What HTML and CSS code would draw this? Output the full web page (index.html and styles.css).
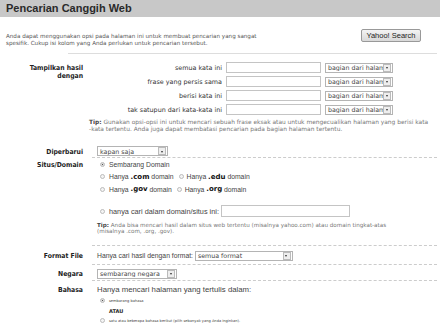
FILE: index.html
```html
<!DOCTYPE html>
<html>
  <head>
    <meta charset="UTF-8" />
    <title>Pencarian Canggih Web</title>
    <link rel="stylesheet" href="styles.css">
  </head>
  <body>
    <div class="header">
      <h1 class="title">Pencarian Canggih Web</h1>
    </div>

    <div class="intro">
      <p class="intro-text">Anda dapat menggunakan opsi pada halaman ini untuk membuat pencarian yang sangat<br>spesifik. Cukup isi kolom yang Anda perlukan untuk pencarian tersebut.</p>
      <button class="btn">Yahoo! Search</button>
    </div>
    <div class="rule"></div>

    <!-- kata kunci -->
    <div class="section">
      <div class="label">Tampilkan hasil<br>dengan</div>
      <div class="content">
        <div class="terms">
          <span class="term-label">semua kata ini</span>
          <span class="input"></span>
          <span class="select sel-part"><span class="sel-text">bagian dari halaman</span><span class="arrow"></span></span>

          <span class="term-label">frase yang persis sama</span>
          <span class="input"></span>
          <span class="select sel-part"><span class="sel-text">bagian dari halaman</span><span class="arrow"></span></span>

          <span class="term-label">berisi kata ini</span>
          <span class="input"></span>
          <span class="select sel-part"><span class="sel-text">bagian dari halaman</span><span class="arrow"></span></span>

          <span class="term-label">tak satupun dari kata-kata ini</span>
          <span class="input"></span>
          <span class="select sel-part"><span class="sel-text">bagian dari halaman</span><span class="arrow"></span></span>
        </div>
        <p class="tip tip-terms"><b>Tip:</b> Gunakan opsi-opsi ini untuk mencari sebuah frase eksak atau untuk mengecualikan halaman yang berisi kata<br>-kata tertentu. Anda juga dapat membatasi pencarian pada bagian halaman tertentu.</p>
      </div>
    </div>

    <div class="section">
      <div class="label">Diperbarui</div>
      <div class="content dashed row row-date">
        <span class="select sel-date"><span class="sel-text">kapan saja</span><span class="arrow"></span></span>
      </div>
    </div>

    <div class="section">
      <div class="label">Situs/Domain</div>
      <div class="content dashed">
        <div class="radio-row"><span class="radio checked"></span>Sembarang Domain</div>
        <div class="radio-row"><span class="radio"></span>Hanya <b>.com</b> domain <span class="radio"></span>Hanya <b>.edu</b> domain</div>
        <div class="radio-row"><span class="radio"></span>Hanya <b>.gov</b> domain <span class="radio"></span>Hanya <b>.org</b> domain</div>
        <div class="radio-row site-row"><span class="radio"></span>hanya cari dalam domain/situs ini: <span class="input site-input"></span></div>
        <p class="tip tip-site"><b>Tip:</b> Anda bisa mencari hasil dalam situs web tertentu (misalnya yahoo.com) atau domain tingkat-atas<br>(misalnya .com, .org, .gov).</p>
      </div>
    </div>

    <div class="section">
      <div class="label">Format File</div>
      <div class="content dashed row row-format">
        <span>Hanya cari hasil dengan format:</span>
        <span class="select sel-format"><span class="sel-text">semua format</span><span class="arrow"></span></span>
      </div>
    </div>

    <div class="section">
      <div class="label">Negara</div>
      <div class="content dashed row row-country">
        <span class="select sel-country"><span class="sel-text">sembarang negara</span><span class="arrow"></span></span>
      </div>
    </div>

    <div class="section">
      <div class="label">Bahasa</div>
      <div class="content lang">
        <div class="lang-intro">Hanya mencari halaman yang tertulis dalam:</div>
        <div class="radio-row small"><span class="radio checked"></span>sembarang bahasa</div>
        <div class="atau">ATAU</div>
        <div class="radio-row small"><span class="radio"></span>satu atau beberapa bahasa berikut (pilih sebanyak yang Anda inginkan).</div>
      </div>
    </div>
  </body>
</html>
```

FILE: styles.css
```css
* {
  box-sizing: border-box;
}
body {
  margin: 0;
  font-family: 'Liberation Sans', Arial, sans-serif;
  color: #333;
  background-color: #fff;
}
.header {
  height: 17px;
  padding-left: 6px;
  background-color: #c8c8c8;
}
.title {
  margin: 0;
  font-size: 11px;
  line-height: 17px;
  font-weight: bold;
  color: #2a2a2a;
}
/* teks pengantar + tombol */
.intro {
  display: flex;
  justify-content: space-between;
  align-items: flex-start;
  height: 36px;
  padding: 12px 19px 0 6px;
}
.intro-text {
  margin: 0;
  padding-top: 4px;
  font-family: 'DejaVu Sans', Verdana, sans-serif;
  font-size: 5.6px;
  line-height: 6.5px;
  color: #555;
}
.btn {
  flex: none;
  width: 60px;
  height: 13px;
  padding: 0;
  font-family: 'Liberation Sans', Arial, sans-serif;
  font-size: 7.5px;
  color: #222;
  background: linear-gradient(#f4f4f4, #d8d8d8);
  border: 1px solid #999;
  border-radius: 2px;
}
.rule {
  margin: 0 3px 0 68px;
  border-top: 1px solid #ddd;
}
/* baris form: label kiri, isi kanan, sejajar baseline */
.section {
  display: grid;
  grid-template-columns: 83px 1fr;
  column-gap: 9px;
  align-items: baseline;
  margin-right: 3px;
}
.label {
  text-align: right;
  font-family: 'DejaVu Sans Condensed', 'DejaVu Sans', sans-serif;
  font-size: 6.8px;
  line-height: 8px;
  font-weight: bold;
  color: #222;
}
.content {
  padding-left: 5px;
  font-size: 6.8px;
  color: #444;
}
.dashed {
  border-bottom: 1px dashed #ccc;
}
.row {
  display: flex;
  align-items: center;
}
.row-date {
  height: 15px;
  padding-top: 2px;
}
.row-format {
  height: 19px;
  padding-top: 2px;
}
.row-country {
  height: 16px;
  padding-top: 3px;
}
.terms {
  display: grid;
  grid-template-columns: 125px 95px 68px;
  column-gap: 4px;
  row-gap: 3px;
  align-items: center;
  margin-top: 8px;
}
.term-label {
  text-align: right;
  white-space: nowrap;
  font-family: 'DejaVu Sans', Verdana, sans-serif;
  font-size: 6.4px;
  color: #333;
}
.input {
  display: inline-block;
  height: 11px;
  border: 1px solid #c4c4c4;
  background-color: #fff;
}
.select {
  display: inline-flex;
  align-items: center;
  height: 10px;
  overflow: hidden;
  border: 1px solid #b4b4b4;
  background-color: #fff;
}
.sel-text {
  flex: 1;
  overflow: hidden;
  padding-left: 2px;
  white-space: nowrap;
  font-family: 'DejaVu Sans', Verdana, sans-serif;
  font-size: 6.3px;
  color: #444;
}
.arrow {
  position: relative;
  flex: none;
  width: 8px;
  height: 8px;
  margin-right: 1px;
  background-color: #eee;
  border: 1px solid #bbb;
}
/* segitiga panah */
.arrow::after {
  content: '';
  position: absolute;
  left: 1.5px;
  top: 2.5px;
  border-left: 1.5px solid transparent;
  border-right: 1.5px solid transparent;
  border-top: 2px solid #333;
}
.sel-part {
  width: 68px;
}
.sel-date {
  width: 71px;
}
.sel-format {
  width: 98px;
  margin-left: 2px;
}
.sel-country {
  width: 80px;
}
.tip {
  margin: 0;
  white-space: nowrap;
  font-family: 'DejaVu Sans', Verdana, sans-serif;
  font-size: 5.6px;
  line-height: 6.5px;
  color: #777;
}
.tip b {
  color: #444;
}
.tip-terms {
  margin: 4px 0 11px -8px;
  font-size: 5.9px;
}
.tip-site {
  margin: 4px 0 10px;
}
.radio-row {
  display: flex;
  align-items: center;
  height: 12.5px;
  font-size: 6.8px;
  color: #444;
  white-space: pre;
}
.radio-row b {
  font-family: 'DejaVu Sans', Verdana, sans-serif;
  font-size: 7px;
  color: #111;
}
.radio {
  display: inline-block;
  flex: none;
  width: 5px;
  height: 5px;
  margin: 0 3px 0 3px;
  border: 1px solid #bbb;
  border-radius: 50%;
  background-color: #f4f4f4;
}
.radio-row > .radio:first-child {
  margin-right: 4px;
}
.radio.checked {
  background: radial-gradient(#555 35%, #ddd 45%);
}
.site-row {
  height: 13px;
  margin-top: 9px;
  font-size: 7.3px;
}
.site-input {
  width: 129px;
  height: 12px;
}
.lang {
  padding-top: 4px;
}
.lang-intro {
  font-size: 7.8px;
  line-height: 10px;
}
.radio-row.small {
  height: 12px;
  font-family: 'DejaVu Sans', Verdana, sans-serif;
  font-size: 3.6px;
}
.atau {
  padding-left: 12px;
  font-family: 'DejaVu Sans', Verdana, sans-serif;
  font-size: 5px;
  line-height: 8px;
  font-weight: bold;
  color: #222;
}
```
